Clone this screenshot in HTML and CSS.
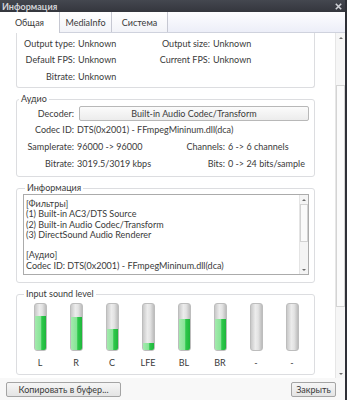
FILE: index.html
```html
<!DOCTYPE html>
<html>
<head>
  <meta charset="UTF-8">
  <title>Информация</title>
  <link rel="stylesheet" href="styles.css">
</head>
<body>
  <div class="window">
    <div class="titlebar">
      <span class="title">Информация</span>
      <svg class="close" width="7" height="7" viewBox="0 0 7 7">
        <path d="M0.8 0.8 L6.2 6.2 M6.2 0.8 L0.8 6.2" stroke="#cfd1d6" stroke-width="1.6"/>
      </svg>
    </div>

    <div class="tabs">
      <div class="tab active">Общая</div>
      <div class="tab">MediaInfo</div>
      <div class="tab">Система</div>
    </div>

    <div class="main">
      <div class="content">
        <div class="group group-cut">
          <div class="info-grid">
            <span class="lbl">Output type:</span><span>Unknown</span>
            <span class="lbl">Output size:</span><span>Unknown</span>
            <span class="lbl">Default FPS:</span><span>Unknown</span>
            <span class="lbl">Current FPS:</span><span>Unknown</span>
            <span class="lbl">Bitrate:</span><span>Unknown</span>
          </div>
        </div>

        <fieldset class="group">
          <legend>Аудио</legend>
          <div class="audio-grid">
            <span class="lbl">Decoder:</span>
            <div class="decoder-btn">Built-in Audio Codec/Transform</div>
            <span class="lbl">Codec ID:</span><span class="wide">DTS(0x2001) - FFmpegMininum.dll(dca)</span>
            <span class="lbl">Samplerate:</span><span>96000 -&gt; 96000</span>
            <span class="lbl">Channels:</span><span>6 -&gt; 6 channels</span>
            <span class="lbl">Bitrate:</span><span>3019.5/3019 kbps</span>
            <span class="lbl">Bits:</span><span>0 -&gt; 24 bits/sample</span>
          </div>
        </fieldset>

        <fieldset class="group group-info">
          <legend>Информация</legend>
          <div class="memo">
            <div class="memo-text">[Фильтры]<br>(1) Built-in AC3/DTS Source<br>(2) Built-in Audio Codec/Transform<br>(3) DirectSound Audio Renderer<br><br>[Аудио]<br>Codec ID: DTS(0x2001) - FFmpegMininum.dll(dca)</div>
            <div class="memo-scroll">
              <div class="arrow up"></div>
              <div class="memo-thumb"></div>
              <div class="memo-track"></div>
              <div class="arrow down"></div>
            </div>
          </div>
        </fieldset>

        <fieldset class="group group-levels">
          <legend>Input sound level</legend>
          <div class="levels">
            <div class="channel"><div class="meter"><div class="fill" style="height: 75%"></div></div><span>L</span></div>
            <div class="channel"><div class="meter"><div class="fill" style="height: 71%"></div></div><span>R</span></div>
            <div class="channel"><div class="meter"><div class="fill" style="height: 46%"></div></div><span>C</span></div>
            <div class="channel"><div class="meter"><div class="fill" style="height: 15%"></div></div><span>LFE</span></div>
            <div class="channel"><div class="meter"><div class="fill" style="height: 67%"></div></div><span>BL</span></div>
            <div class="channel"><div class="meter"><div class="fill" style="height: 67%"></div></div><span>BR</span></div>
            <div class="channel"><div class="meter"></div><span>-</span></div>
            <div class="channel"><div class="meter"></div><span>-</span></div>
          </div>
        </fieldset>
      </div>

      <div class="vscroll">
        <div class="arrow up"></div>
        <div class="vtrack-top"></div>
        <div class="vthumb"></div>
        <div class="vtrack-bottom"></div>
        <div class="arrow down"></div>
      </div>
    </div>

    <div class="footer">
      <div class="btn btn-copy">Копировать в буфер...</div>
      <div class="btn btn-close">Закрыть</div>
    </div>
  </div>
</body>
</html>
```

FILE: styles.css
```css
body {
  margin: 0;
  width: 347px;
  height: 400px;
  overflow: hidden;
  font-family: Lato, "Noto Sans", sans-serif;
  font-size: 9px;
  color: #3a3a3a;
  background-color: #2e3037;
}
.window {
  display: flex;
  flex-direction: column;
  width: 345px;
  height: 400px;
  background-color: #fff;
  border-right: 2px solid #2e3037;
}
.titlebar {
  display: flex;
  align-items: center;
  justify-content: space-between;
  height: 12px;
  padding: 0 3px 0 2px;
  background: linear-gradient(#44474f, #34363d);
}
.title {
  color: #d2d4d9;
  font-weight: bold;
  font-size: 9px;
}
.close {
  display: block;
}
.tabs {
  display: flex;
  height: 21px;
  box-sizing: border-box;
  border-bottom: 1px solid #cfd2dd;
  background: linear-gradient(#fdfdff, #eceef8);
}
.tab {
  display: flex;
  align-items: center;
  justify-content: center;
  box-sizing: border-box;
  height: 20px;
  border-right: 1px solid #c6c8d2;
  background: linear-gradient(#ffffff, #f2f3f8);
  color: #3a3a3a;
}
.tab:nth-child(1) { width: 60px; }
.tab:nth-child(2) { width: 52px; }
.tab:nth-child(3) { width: 56px; }
.tab.active {
  height: 21px;
  background: #fff;
}
.main {
  display: flex;
  height: 345px;
}
.content {
  flex: 1;
  display: flex;
  flex-direction: column;
  gap: 5px;
  padding: 0 20px 0 16px;
  overflow: hidden;
}
.group {
  margin: 0;
  padding: 0;
  min-width: 0;
  border: 1px solid #dcdde0;
  border-radius: 3px;
}
.group legend {
  margin-left: 2px;
  padding: 0 2px;
  line-height: 12px;
  color: #3a3a3a;
}
.group-cut {
  border-top: none;
  border-radius: 0 0 3px 3px;
  padding: 2px 0 2.5px;
}
.info-grid span,
.audio-grid span {
  white-space: nowrap;
}
.lbl {
  text-align: right;
}
.info-grid {
  display: grid;
  grid-template-columns: 58px 70px 59px 1fr;
  grid-auto-rows: 16.5px;
  column-gap: 3px;
  align-items: center;
}
.audio-grid {
  display: grid;
  grid-template-columns: 57px 100px 45px 1fr;
  grid-template-rows: 15px;
  grid-auto-rows: 17px;
  column-gap: 3px;
  align-items: center;
  padding: 1px 0 4px;
}
.audio-grid .wide {
  grid-column: 2 / 5;
}
.decoder-btn {
  grid-column: 2 / 5;
  height: 15px;
  margin: 0 5px 0 2px;
  box-sizing: border-box;
  border: 1px solid #b8b8b8;
  border-radius: 2px;
  background: linear-gradient(#fbfbfb, #ececec);
  display: flex;
  align-items: center;
  justify-content: center;
}
.group-info {
  padding: 0 5px 7px 6px;
}
.memo {
  display: flex;
  height: 81px;
  box-sizing: border-box;
  border: 1px solid #ababab;
  background: #fff;
}
.memo-text {
  flex: 1;
  padding: 4px 0 0 2px;
  line-height: 10.3px;
  overflow: hidden;
  white-space: nowrap;
}
.memo-scroll {
  width: 8px;
  display: flex;
  flex-direction: column;
  border-left: 1px solid #e4e4e4;
  background: #f4f4f4;
}
.memo-thumb {
  height: 38px;
  box-sizing: border-box;
  border: 1px solid #d2d2d2;
  background: #fafafa;
}
.memo-track {
  flex: 1;
}
.arrow {
  height: 9px;
  display: flex;
  align-items: center;
  justify-content: center;
}
.arrow::after {
  content: "";
  border-left: 2px solid transparent;
  border-right: 2px solid transparent;
}
.arrow.up::after {
  border-bottom: 2px solid #6c6c6c;
}
.arrow.down::after {
  border-top: 2px solid #6c6c6c;
}
.group-levels {
  padding: 3px 0 5px 5px;
}
.levels {
  display: flex;
}
.channel {
  width: 36px;
  display: flex;
  flex-direction: column;
  align-items: center;
  gap: 6px;
}
.channel span {
  line-height: 12px;
}
.meter {
  width: 13px;
  height: 48px;
  box-sizing: border-box;
  border: 1px solid #bdbdbd;
  border-radius: 3px;
  background: linear-gradient(to right, #c9c9c9, #ececec 40%, #e3e3e3 65%, #bcbcbc);
  display: flex;
  flex-direction: column;
  justify-content: flex-end;
  overflow: hidden;
}
.fill {
  background: linear-gradient(to right, #a4eaae, #88e497 50%, #2ec84b 62%, #1eb63b);
}
.vscroll {
  width: 9px;
  display: flex;
  flex-direction: column;
  border-left: 1px solid #e6e6e6;
  background: #f6f6f6;
}
.vtrack-top {
  height: 43px;
}
.vthumb {
  height: 222px;
  box-sizing: border-box;
  border: 1px solid #d4d4d4;
  background: #fbfbfb;
}
.vtrack-bottom {
  flex: 1;
}
.footer {
  flex: 1;
  display: flex;
  justify-content: space-between;
  align-items: flex-start;
  padding: 4px 9px 0 6px;
  background: #f8f8f8;
}
.btn {
  height: 15px;
  box-sizing: border-box;
  border: 1px solid #a4a4a4;
  border-radius: 2px;
  background: linear-gradient(#f6f6f6, #e4e4e4);
  display: flex;
  align-items: center;
  justify-content: center;
  color: #3a3a3a;
}
.btn-copy {
  width: 115px;
}
.btn-close {
  width: 45px;
}
```
